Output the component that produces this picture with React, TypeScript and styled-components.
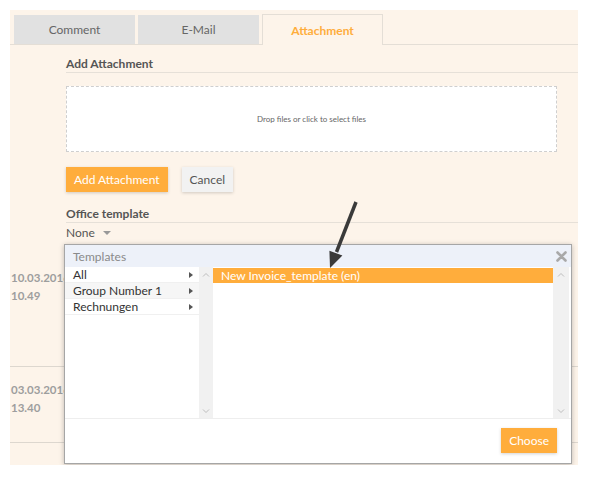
import React from "react"
import styled, { createGlobalStyle } from "styled-components"

const ORANGE = "#ffad3c"

const GlobalStyle = createGlobalStyle`
  html, body {
    margin: 0;
    padding: 0;
    background: #fff;
    font-family: Lato, "Open Sans", sans-serif;
  }
  * { box-sizing: border-box; }
`

const Page = styled.div`
  padding: 10px 0 0 10px;
`

const Panel = styled.div`
  position: relative;
  width: 568px;
  height: 455px;
  background: #fdf4ea;
  overflow: hidden;
`

const TabBar = styled.div`
  display: flex;
  gap: 3px;
  padding: 5px 0 0 4px;
  border-bottom: 1px solid #e4ded6;
`

const Tab = styled.div<{ $active?: boolean }>`
  width: 121px;
  height: ${p => (p.$active ? 31 : 29)}px;
  margin-top: ${p => (p.$active ? -1 : 0)}px;
  margin-bottom: ${p => (p.$active ? -1 : 0)}px;
  display: flex;
  align-items: center;
  justify-content: center;
  font-size: 12px;
  color: ${p => (p.$active ? ORANGE : "#666")};
  font-weight: ${p => (p.$active ? 700 : 400)};
  background: ${p => (p.$active ? "#fdf4ea" : "#e1e1e1")};
  border: ${p => (p.$active ? "1px solid #e4ded6" : "none")};
  border-bottom: none;
`

const Content = styled.div`
  padding-left: 56px;
`

const SectionTitle = styled.div<{ $top: number }>`
  margin-top: ${p => p.$top}px;
  height: 18px;
  line-height: 17px;
  font-size: 12px;
  font-weight: 700;
  color: #555;
  border-bottom: 1px solid #e6e0d8;
`

const DropZone = styled.div`
  margin-top: 13px;
  width: 491px;
  height: 66px;
  background: #fff;
  border: 1px dashed #cfcfcf;
  display: flex;
  align-items: center;
  justify-content: center;
  font-size: 8px;
  color: #666;
`

const ButtonRow = styled.div`
  display: flex;
  gap: 14px;
  margin-top: 15px;
`

const Button = styled.button<{ $primary?: boolean }>`
  height: 25px;
  padding: 0 ${p => (p.$primary ? 8 : 8)}px;
  border: none;
  font-family: inherit;
  font-size: 12px;
  color: ${p => (p.$primary ? "#fff" : "#555")};
  background: ${p => (p.$primary ? ORANGE : "#f2f2f2")};
  box-shadow: 0 1px 3px rgba(0, 0, 0, 0.18);
  cursor: pointer;
`

const SelectLine = styled.div`
  display: flex;
  align-items: center;
  gap: 8px;
  height: 19px;
  font-size: 12px;
  color: #555;
`

const DownCaret = styled.span`
  width: 0;
  height: 0;
  border-left: 4px solid transparent;
  border-right: 4px solid transparent;
  border-top: 4px solid #999;
  margin-top: 1px;
`

const HistoryRow = styled.div<{ $height: number; $pad: number }>`
  height: ${p => p.$height}px;
  padding: ${p => p.$pad}px 0 0 1px;
  border-bottom: 1px solid #ddd7cf;
  font-size: 11.5px;
  font-weight: 700;
  line-height: 18px;
  color: #9e9e9e;
`

/* template picker dialog, sits over the form */
const Dialog = styled.div`
  position: absolute;
  left: 54px;
  top: 234px;
  width: 508px;
  height: 220px;
  background: #fff;
  border: 1px solid #a6a6a6;
  box-shadow: 0 1px 5px rgba(0, 0, 0, 0.25);
  display: flex;
  flex-direction: column;
`

const DialogHeader = styled.div`
  height: 22px;
  background: #edf1f9;
  display: flex;
  align-items: center;
  justify-content: space-between;
  padding: 0 4px 0 8px;
  font-size: 12px;
  color: #8a8a8a;
`

const DialogBody = styled.div`
  display: grid;
  grid-template-columns: 134px 14px 340px 16px;
  height: 151px;
`

const GroupList = styled.div`
  display: flex;
  flex-direction: column;
`

const GroupItem = styled.div<{ $shade?: boolean }>`
  height: 16px;
  display: flex;
  align-items: center;
  justify-content: space-between;
  padding: 0 6px 0 8px;
  font-size: 12px;
  color: #333;
  background: ${p => (p.$shade ? "#f6f6f6" : "#fff")};
  border-bottom: 1px solid #f0f0f0;
`

const RightCaret = styled.span`
  width: 0;
  height: 0;
  border-top: 3.5px solid transparent;
  border-bottom: 3.5px solid transparent;
  border-left: 4px solid #555;
`

const ScrollTrack = styled.div`
  background: #f1f1f1;
  display: flex;
  flex-direction: column;
  justify-content: space-between;
  align-items: center;
  padding: 5px 0 4px;
`

const TemplateList = styled.div`
  padding-top: 1px;
`

const TemplateItem = styled.div<{ $selected?: boolean }>`
  height: 15px;
  line-height: 15px;
  padding-left: 8px;
  font-size: 12px;
  color: ${p => (p.$selected ? "#fff" : "#333")};
  background: ${p => (p.$selected ? ORANGE : "transparent")};
`

const DialogFooter = styled.div`
  flex: 1;
  border-top: 1px solid #eeeeee;
  display: flex;
  justify-content: flex-end;
  align-items: center;
  padding: 0 14px 1px 0;
`

const Annotation = styled.svg`
  position: absolute;
  left: 300px;
  top: 175px;
  pointer-events: none;
`

const Chevron = ({ up }: { up?: boolean }) => (
  <svg width="8" height="5" viewBox="0 0 8 5">
    <polyline
      points={up ? "1,4.5 4,1.5 7,4.5" : "1,0.5 4,3.5 7,0.5"}
      fill="none"
      stroke="#bdbdbd"
      strokeWidth="1"
    />
  </svg>
)

const CloseIcon = () => (
  <svg width="11" height="11" viewBox="0 0 11 11">
    <path d="M1.5 1.5 L9.5 9.5 M9.5 1.5 L1.5 9.5" stroke="#a9a9a9" strokeWidth="2.6" strokeLinecap="round" />
  </svg>
)

const groups = ["All", "Group Number 1", "Rechnungen"]

export default function App() {
  return (
    <>
      <GlobalStyle />
      <Page>
        <Panel>
          <TabBar>
            <Tab>Comment</Tab>
            <Tab>E-Mail</Tab>
            <Tab $active>Attachment</Tab>
          </TabBar>

          <Content>
            <SectionTitle $top={10}>Add Attachment</SectionTitle>
            <DropZone>Drop files or click to select files</DropZone>
            <ButtonRow>
              <Button $primary>Add Attachment</Button>
              <Button>Cancel</Button>
            </ButtonRow>
            <SectionTitle $top={13}>Office template</SectionTitle>
            <SelectLine>
              None <DownCaret />
            </SelectLine>
          </Content>

          <HistoryRow $height={125} $pad={27}>
            10.03.2016
            <br />
            10.49
          </HistoryRow>
          <HistoryRow $height={76} $pad={14}>
            03.03.2016
            <br />
            13.40
          </HistoryRow>

          <Dialog>
            <DialogHeader>
              Templates
              <CloseIcon />
            </DialogHeader>
            <DialogBody>
              <GroupList>
                {groups.map((g, i) => (
                  <GroupItem key={g} $shade={i === 1}>
                    {g}
                    <RightCaret />
                  </GroupItem>
                ))}
              </GroupList>
              <ScrollTrack>
                <Chevron up />
                <Chevron />
              </ScrollTrack>
              <TemplateList>
                <TemplateItem $selected>New Invoice_template (en)</TemplateItem>
              </TemplateList>
              <ScrollTrack>
                <Chevron up />
                <Chevron />
              </ScrollTrack>
            </DialogBody>
            <DialogFooter>
              <Button $primary>Choose</Button>
            </DialogFooter>
          </Dialog>

          <Annotation width="50" height="90" viewBox="0 0 50 90">
            <line x1="46" y1="17" x2="26.5" y2="67" stroke="#3a3a3a" strokeWidth="3.5" />
            <polygon points="20,83 32.4,70.5 19.4,65.7" fill="#3a3a3a" />
          </Annotation>
        </Panel>
      </Page>
    </>
  )
}
